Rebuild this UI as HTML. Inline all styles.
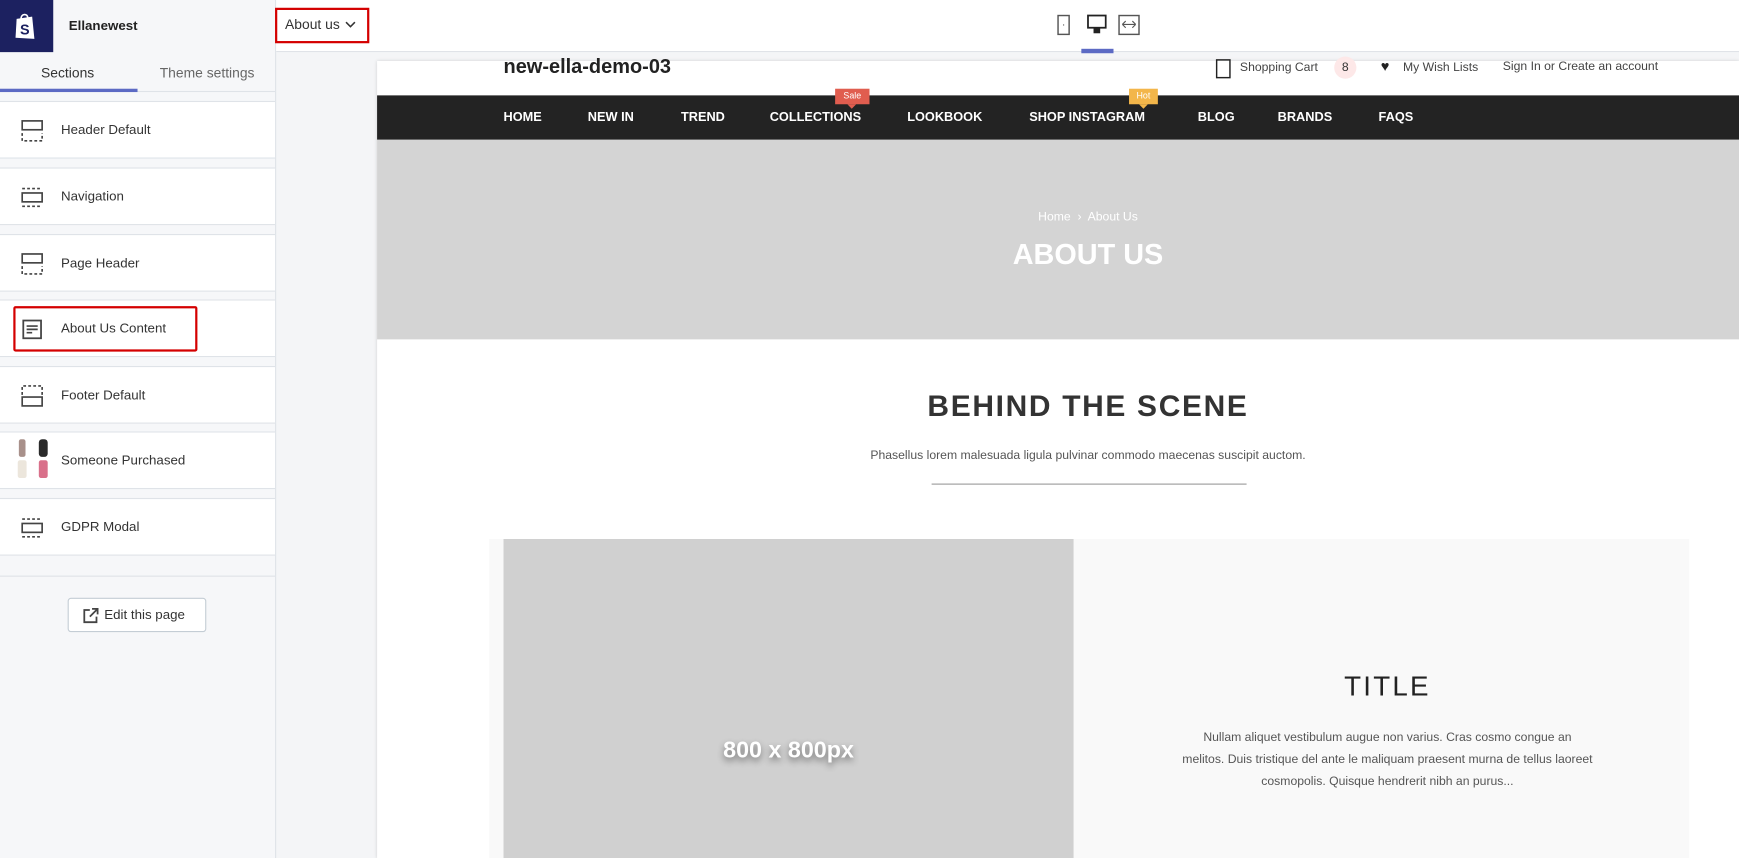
<!DOCTYPE html>
<html><head><meta charset="utf-8"><style>
*{margin:0;padding:0;box-sizing:border-box}
html,body{width:1739px;height:858px;overflow:hidden;background:#f4f5f7;font-family:"Liberation Sans",sans-serif}
#w{position:absolute;left:0;top:0;width:1568px;height:774px;transform:scale(1.10906);transform-origin:0 0;background:#f4f5f7}
.a{position:absolute}
.sb{left:0;top:0;width:249px;height:774px;background:#f6f7f9;border-right:1px solid #dfe3e8}
.card{position:absolute;left:0;width:248px;height:52px;background:#fff;border-top:1px solid #dfe3e8;border-bottom:1px solid #dfe3e8}
.card span{position:absolute;left:55px;top:18px;font-size:12px;color:#333}
.card svg{position:absolute;left:19px;top:16px}
.nav span{position:absolute;top:100px;font-size:11.5px;font-weight:bold;color:#fff}
.c{text-align:center;position:absolute}
</style></head><body><div id="w">
<div class="a sb"></div>
<div class="a" style="left:249px;top:0;width:1319px;height:47px;background:#fff;border-bottom:1px solid #dfe3e8"></div>
<div class="a" style="left:0;top:0;width:48px;height:47px;background:#1c2160"></div>
<svg class="a" style="left:12px;top:11px" width="22" height="26" viewBox="0 0 22 26"><path d="M3 6 L17 4 L19 24 L2 23 Z" fill="#fff"/><path d="M7 6 C7 1 13 1 13 5" stroke="#fff" fill="none" stroke-width="1.5"/><text x="6" y="20" font-size="13" font-weight="bold" fill="#1c2160" font-family="Liberation Sans">S</text></svg>
<div class="a" style="left:62px;top:16px;font-size:12px;color:#222;font-weight:bold">Ellanewest</div>
<div class="a" style="left:248px;top:7px;width:85px;height:32px;border:2px solid #d40000"></div>
<div class="a" style="left:257px;top:15px;font-size:12.5px;color:#333">About us</div>
<svg class="a" style="left:311px;top:18px" width="10" height="8"><path d="M1 2 L5 6 L9 2" stroke="#333" fill="none" stroke-width="1.4"/></svg>
<svg class="a" style="left:953px;top:13px" width="12" height="19"><rect x="1" y="1" width="10" height="17" stroke="#555" fill="none" stroke-width="1.3"/><rect x="5.5" y="9" width="1" height="1" fill="#555"/></svg>
<svg class="a" style="left:980px;top:13px" width="18" height="19"><rect x="1" y="1" width="16" height="11" stroke="#222" fill="none" stroke-width="1.6"/><rect x="6" y="12" width="6" height="5" fill="#222"/></svg>
<svg class="a" style="left:1008px;top:13px" width="20" height="19"><rect x="1" y="1" width="18" height="17" stroke="#555" fill="none" stroke-width="1.3"/><path d="M4 9 H16 M4 9 L7 6 M4 9 L7 12 M16 9 L13 6 M16 9 L13 12" stroke="#555" fill="none"/></svg>
<div class="a" style="left:975px;top:44px;width:29px;height:4px;background:#5c6ac4"></div>
<div class="a" style="left:0;top:48px;width:248px;height:35px;border-bottom:1px solid #dfe3e8"></div>
<div class="a" style="left:37px;top:59px;font-size:12.5px;color:#333">Sections</div>
<div class="a" style="left:144px;top:59px;font-size:12.5px;color:#666">Theme settings</div>
<div class="a" style="left:0;top:80px;width:124px;height:3px;background:#5c6ac4"></div>
<div class="card" style="top:91px"><svg width="20" height="20"><rect x="1" y="1" width="18" height="8" stroke="#444" fill="none" stroke-width="1.5"/><path d="M1 12 V19 H19 V12" stroke="#444" fill="none" stroke-width="1.5" stroke-dasharray="2.5 2"/></svg><span>Header Default</span></div>
<div class="card" style="top:151px"><svg width="20" height="20"><path d="M1 2 H19 M1 18 H19" stroke="#444" stroke-width="1.5" stroke-dasharray="2.5 2"/><rect x="1" y="6" width="18" height="8" stroke="#444" fill="none" stroke-width="1.5"/></svg><span>Navigation</span></div>
<div class="card" style="top:211px"><svg width="20" height="20"><rect x="1" y="1" width="18" height="8" stroke="#444" fill="none" stroke-width="1.5"/><path d="M1 12 V19 H19 V12" stroke="#444" fill="none" stroke-width="1.5" stroke-dasharray="2.5 2"/></svg><span>Page Header</span></div>
<div class="card" style="top:270px"><svg width="20" height="20"><rect x="2" y="2" width="16" height="16" stroke="#444" fill="none" stroke-width="1.6"/><path d="M5 7 H15 M5 10 H15 M5 13 H10" stroke="#444" stroke-width="1.5"/></svg><span>About Us Content</span></div>
<div class="a" style="left:12px;top:276px;width:166px;height:41px;border:2px solid #d40000;border-radius:2px"></div>
<div class="card" style="top:330px"><svg width="20" height="20"><path d="M1 9 V1 H19 V9" stroke="#444" fill="none" stroke-width="1.5" stroke-dasharray="2.5 2"/><rect x="1" y="11" width="18" height="8" stroke="#444" fill="none" stroke-width="1.5"/></svg><span>Footer Default</span></div>
<div class="card" style="top:389px"><div class="a" style="left:17px;top:6px;width:6px;height:16px;background:#a8908a;border-radius:2px"></div><div class="a" style="left:35px;top:6px;width:8px;height:16px;background:#2a2a2a;border-radius:3px"></div><div class="a" style="left:16px;top:25px;width:8px;height:16px;background:#ece6dc;border-radius:2px"></div><div class="a" style="left:35px;top:25px;width:8px;height:16px;background:#d9708a;border-radius:2px"></div><span>Someone Purchased</span></div>
<div class="card" style="top:449px"><svg width="20" height="20"><path d="M1 2 H19 M1 18 H19" stroke="#444" stroke-width="1.5" stroke-dasharray="2.5 2"/><rect x="1" y="6" width="18" height="8" stroke="#444" fill="none" stroke-width="1.5"/></svg><span>GDPR Modal</span></div>
<div class="a" style="left:0;top:519px;width:248px;height:1px;background:#dfe3e8"></div>
<div class="a" style="left:61px;top:539px;width:125px;height:31px;background:#fff;border:1px solid #c4cdd5;border-radius:3px"></div>
<svg class="a" style="left:74px;top:547px" width="16" height="16"><path d="M7 3 H2 V14 H13 V9" stroke="#444" fill="none" stroke-width="1.6"/><path d="M7 9 L14 2 M9 2 H14 V7" stroke="#444" fill="none" stroke-width="1.6"/></svg>
<div class="a" style="left:94px;top:547px;font-size:12px;color:#333">Edit this page</div>
<div class="a" style="left:340px;top:55px;width:1228px;height:719px;background:#fff;box-shadow:0 0 3px rgba(0,0,0,.15)"></div>
<div class="a" style="left:454px;top:50px;font-size:18px;font-weight:bold;color:#222">new-ella-demo-03</div>
<svg class="a" style="left:1096px;top:53px" width="14" height="18"><rect x="1" y="1" width="12" height="16" stroke="#222" fill="none" stroke-width="1.3"/></svg>
<div class="a" style="left:1118px;top:55px;font-size:11px;color:#444">Shopping Cart</div>
<div class="a" style="left:1203px;top:51px;width:20px;height:20px;border-radius:50%;background:#fde8e8;font-size:11px;color:#333;text-align:center;line-height:20px">8</div>
<div class="a" style="left:1245px;top:52px;font-size:13px;color:#222">♥</div>
<div class="a" style="left:1265px;top:55px;font-size:11px;color:#444">My Wish Lists</div>
<div class="a" style="left:1355px;top:54px;font-size:11px;color:#444">Sign In or Create an account</div>
<div class="a" style="left:340px;top:86px;width:1228px;height:40px;background:#232323"></div>
<div class="nav"><span style="left:454px">HOME</span><span style="left:530px">NEW IN</span><span style="left:614px">TREND</span><span style="left:694px">COLLECTIONS</span><span style="left:818px">LOOKBOOK</span><span style="left:928px">SHOP INSTAGRAM</span><span style="left:1080px">BLOG</span><span style="left:1152px">BRANDS</span><span style="left:1243px">FAQS</span></div>
<div class="a" style="left:753px;top:80px;width:31px;height:14px;background:#e05d4f;font-size:8px;color:#fff;text-align:center;line-height:14px">Sale</div>
<div class="a" style="left:764px;top:94px;border:4px solid transparent;border-top-color:#e05d4f"></div>
<div class="a" style="left:1018px;top:80px;width:26px;height:14px;background:#f3b64a;font-size:8px;color:#fff;text-align:center;line-height:14px">Hot</div>
<div class="a" style="left:1027px;top:94px;border:4px solid transparent;border-top-color:#f3b64a"></div>
<div class="a" style="left:340px;top:126px;width:1228px;height:180px;background:#d4d4d4"></div>
<div class="c" style="left:340px;width:1282px;top:190px;font-size:11px;color:#fff">Home &nbsp;›&nbsp; About Us</div>
<div class="c" style="left:340px;width:1282px;top:214px;font-size:26px;font-weight:bold;color:#fff">ABOUT US</div>
<div class="c" style="left:340px;width:1282px;top:351px;font-size:27px;font-weight:bold;color:#333;letter-spacing:1.5px">BEHIND THE SCENE</div>
<div class="c" style="left:340px;width:1282px;top:405px;font-size:11px;color:#555">Phasellus lorem malesuada ligula pulvinar commodo maecenas suscipit auctom.</div>
<div class="a" style="left:840px;top:436px;width:284px;height:1px;background:#999"></div>
<div class="a" style="left:441px;top:486px;width:1082px;height:288px;background:#f9f9f9"></div>
<div class="a" style="left:454px;top:486px;width:514px;height:288px;background:#d0d0d0"></div>
<div class="c" style="left:454px;width:514px;top:665px;font-size:21px;font-weight:bold;color:#fff;text-shadow:0 3px 6px rgba(0,0,0,.45)">800 x 800px</div>
<div class="c" style="left:1060px;width:382px;top:605px;font-size:25px;color:#222;letter-spacing:2px">TITLE</div>
<div class="c" style="left:1066px;width:370px;top:655px;font-size:11px;line-height:20px;color:#555">Nullam aliquet vestibulum augue non varius. Cras cosmo congue an melitos. Duis tristique del ante le maliquam praesent murna de tellus laoreet cosmopolis. Quisque hendrerit nibh an purus...</div>
</div></body></html>
